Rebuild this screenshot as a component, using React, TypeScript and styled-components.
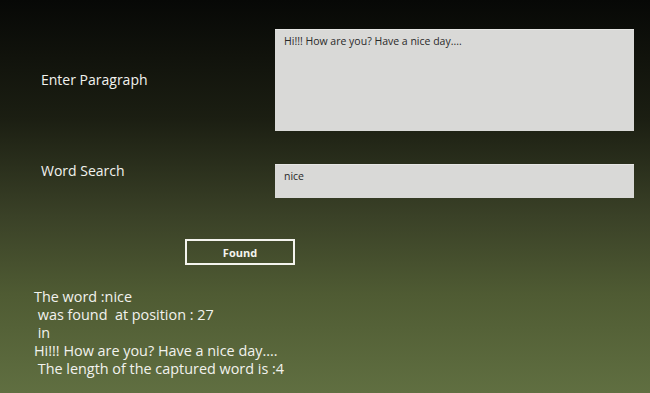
import React from "react";
import styled, { createGlobalStyle } from "styled-components";

const GlobalStyle = createGlobalStyle`
  html, body { margin: 0; padding: 0; }
  body {
    width: 650px;
    height: 393px;
    overflow: hidden;
    background: linear-gradient(to bottom, #070806 0%, #1b1e12 30%, #3a4127 55%, #4f5b33 75%, #606f41 100%);
    font-family: "Open Sans", "Noto Sans", sans-serif;
  }
`;

const Page = styled.div`
  display: flex;
  flex-direction: column;
  padding-top: 29px;
  height: 393px;
  box-sizing: border-box;
`;

const FormGrid = styled.div`
  display: grid;
  grid-template-columns: 275px 359px;
  row-gap: 33px;
`;

const Label = styled.div<{ $align?: string; $offset?: number }>`
  align-self: ${(p) => p.$align || "center"};
  margin-top: ${(p) => p.$offset ?? 0}px;
  padding-left: 41px;
  color: #f2f2ee;
  font-size: 14px;
  line-height: 20px;
`;

const Box = styled.div<{ $h: number }>`
  height: ${(p) => p.$h}px;
  background: #d9d9d7;
  border-top: 1px solid #e6e6e4;
  box-sizing: border-box;
  padding: 3px 9px;
  color: #2a2a2a;
  font-size: 10.5px;
  line-height: 16px;
`;

const ButtonRow = styled.div`
  display: flex;
  padding-left: 185px;
  margin-top: 41px;
`;

const Button = styled.button`
  width: 110px;
  height: 26px;
  box-sizing: border-box;
  border: 2px solid #f4f4ee;
  background: transparent;
  color: #f4f4ee;
  font-family: "Open Sans", "Noto Sans", sans-serif;
  font-weight: 700;
  font-size: 11px;
  padding: 0;
`;

const Result = styled.div`
  margin-top: 23px;
  padding-left: 34px;
  color: #f2f2ee;
  font-size: 14.4px;
  line-height: 18px;
  white-space: pre;
`;

export default function App() {
  const lines = [
    "The word :nice",
    " was found  at position : 27",
    " in",
    "Hi!!! How are you? Have a nice day....",
    " The length of the captured word is :4",
  ];
  return (
    <>
      <GlobalStyle />
      <Page>
        <FormGrid>
          <Label>Enter Paragraph</Label>
          <Box $h={102}>Hi!!! How are you? Have a nice day....</Box>
          <Label $align="start" $offset={-3}>Word Search</Label>
          <Box $h={34}>nice</Box>
        </FormGrid>
        <ButtonRow>
          <Button>Found</Button>
        </ButtonRow>
        <Result>{lines.join("\n")}</Result>
      </Page>
    </>
  );
}
